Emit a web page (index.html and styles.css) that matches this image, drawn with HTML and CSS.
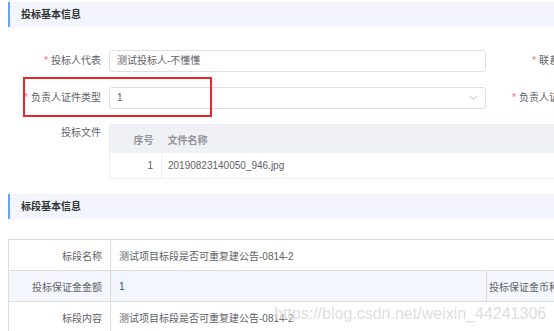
FILE: index.html
```html
<!DOCTYPE html>
<html lang="zh-CN">
<head>
  <meta charset="UTF-8">
  <meta name="viewport" content="width=device-width, initial-scale=1.0">
  <title>投标基本信息</title>
  <link rel="stylesheet" href="styles.css">
</head>
<body>

  <div class="page">
    <div class="section-title">投标基本信息</div>

    <div class="form">
      <div class="form-row">
        <div class="form-item">
          <label class="form-label"><span class="req">*</span>投标人代表</label>
          <div class="input">测试投标人-不懂懂</div>
        </div>
        <div class="form-item">
          <label class="form-label"><span class="req">*</span>联系人电话</label>
          <div class="input"></div>
        </div>
      </div>

      <div class="form-row">
        <div class="form-item">
          <label class="form-label"><span class="req">*</span>负责人证件类型</label>
          <div class="input select">
            <span>1</span>
            <svg class="arrow" width="9" height="6" viewBox="0 0 9 6"><path d="M1 1 L4.5 4.5 L8 1" fill="none" stroke="#c0c4cc" stroke-width="1"/></svg>
          </div>
        </div>
        <div class="form-item">
          <label class="form-label"><span class="req">*</span>负责人证件号码</label>
          <div class="input"></div>
        </div>
      </div>

      <div class="form-row file-row">
        <label class="form-label">投标文件</label>
        <table class="file-table">
          <thead>
            <tr><th class="col-no">序号</th><th>文件名称</th></tr>
          </thead>
          <tbody>
            <tr><td class="col-no">1</td><td>20190823140050_946.jpg</td></tr>
          </tbody>
        </table>
      </div>
    </div>

    <div class="section-title">标段基本信息</div>

    <table class="info-table">
      <colgroup>
        <col style="width:102px">
        <col style="width:376px">
        <col style="width:94px">
        <col style="width:300px">
      </colgroup>
      <tr>
        <td class="label">标段名称</td>
        <td colspan="3">测试项目标段是否可重复建公告-0814-2</td>
      </tr>
      <tr class="alt">
        <td class="label">投标保证金金额</td>
        <td class="num">1</td>
        <td class="label label-left">投标保证金币种</td>
        <td>人民币</td>
      </tr>
      <tr>
        <td class="label">标段内容</td>
        <td colspan="3">测试项目标段是否可重复建公告-0814-2</td>
      </tr>
    </table>

    <div class="highlight"></div>
    <div class="watermark">https://blog.csdn.net/weixin_44241306</div>
  </div>

</body>
</html>
```

FILE: styles.css
```css
body {
  margin: 0;
  background: #fff;
  font-family: "Liberation Sans", "Noto Sans CJK SC", sans-serif;
  font-size: 10px;
  color: #606266;
  overflow: hidden;
}
.page {
  position: relative;
  width: 900px;
  padding-top: 2px;
}
.section-title {
  margin-left: 8px;
  height: 25px;
  line-height: 25px;
  padding-left: 11px;
  border-left: 2px solid #66a3f6;
  background-color: #f2f6fc;
  font-weight: bold;
  color: #303133;
}
.form {
  padding-top: 23px;
}
.form-row {
  display: flex;
  margin-bottom: 15px;
}
.form-item {
  display: flex;
  width: 486px;
  flex: none;
}
.form-label {
  width: 109px;
  flex: none;
  box-sizing: border-box;
  padding-right: 8px;
  text-align: right;
  line-height: 22px;
}
.form-item + .form-item .form-label {
  padding-right: 6px;
}
.req {
  color: #f56c6c;
  margin-right: 3px;
}
.input {
  width: 377px;
  height: 22px;
  box-sizing: border-box;
  border: 1px solid #dcdfe6;
  border-radius: 3px;
  padding-left: 7px;
  line-height: 20px;
  color: #606266;
}
.select {
  display: flex;
  justify-content: space-between;
  align-items: center;
  padding-right: 7px;
}
.file-row .form-label {
  line-height: 18px;
}
.file-table {
  width: 700px;
  border-collapse: collapse;
  border: 1px solid #ebeef5;
}
.file-table th {
  height: 28px;
  background-color: #eff1f4;
  text-align: left;
  font-weight: bold;
  color: #909399;
  padding: 0 0 0 6px;
}
.file-table td {
  height: 25px;
  padding: 0 0 0 6px;
  border-bottom: 1px solid #ebeef5;
}
.file-table .col-no {
  width: 52px;
  box-sizing: border-box;
  text-align: right;
  padding: 0 8px 0 0;
}
.file-table td.col-no {
  border-right: 1px solid #ebeef5;
}
.info-table {
  margin: 20px 0 0 8px;
  border-collapse: collapse;
  table-layout: fixed;
  width: 872px;
}
.info-table td {
  height: 30px;
  border: 1px solid #dcdcdc;
  padding: 0 8px;
  white-space: nowrap;
  overflow: hidden;
}
.info-table td.label {
  text-align: right;
  padding: 0 8px 0 0;
}
.info-table td.label-left {
  text-align: left;
  padding: 0 0 0 2px;
}
.info-table tr.alt td {
  background-color: #f3f7fd;
}
.info-table .num {
  color: #1f4e8c;
}
.highlight {
  position: absolute;
  left: 23px;
  top: 77px;
  width: 189px;
  height: 40px;
  box-sizing: border-box;
  border: 2px solid #e8272a;
}
.watermark {
  position: absolute;
  left: 274px;
  top: 305px;
  font-size: 16px;
  color: rgba(215, 215, 215, 0.85);
  text-shadow: 0 0 2px #fff;
}
```
